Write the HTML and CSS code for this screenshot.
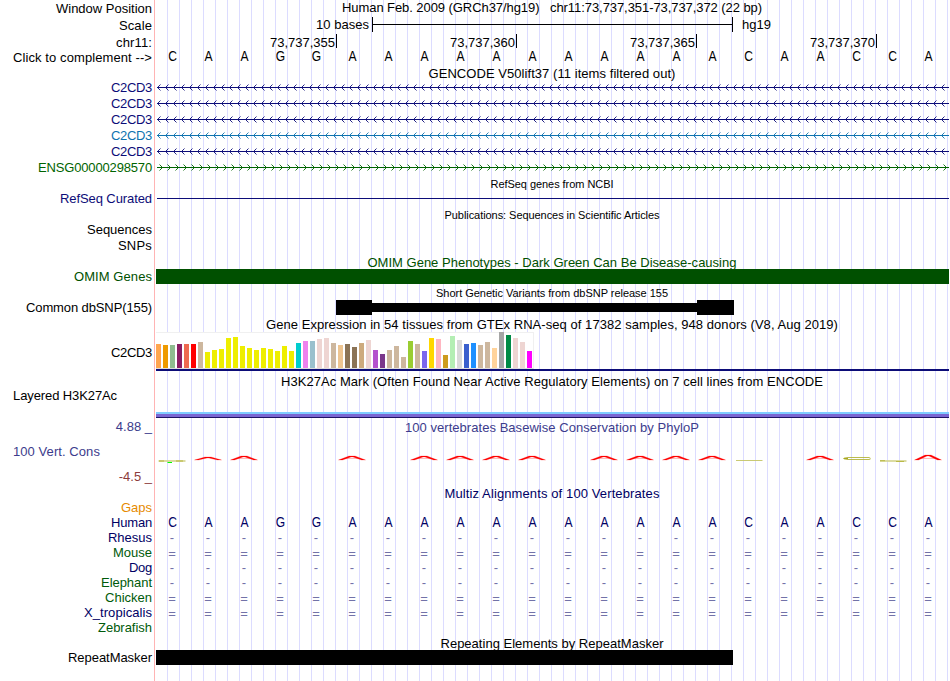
FILE: index.html
```html
<!DOCTYPE html>
<html lang="en">
<head>
<meta charset="utf-8">
<title>Genome Browser</title>
<link rel="stylesheet" href="styles.css">
</head>
<body>
<main class="browser">
  <div class="row h17"><div class="label p1"><span data-w="96">Window Position</span></div><div class="track title"><span data-w="420">Human Feb. 2009 (GRCh37/hg19) &nbsp; chr11:73,737,351-73,737,372 (22 bp)</span></div></div>
  <div class="row h17"><div class="label p1"><span data-w="33">Scale</span></div><div class="track scale"><span class="bases" data-w="53">10 bases</span><div class="ruler"></div><span data-w="29">hg19</span></div></div>
  <div class="row h15"><div class="label p1"><span data-w="36">chr11:</span></div><div class="track ticks"><div class="tick p1"><span data-w="65">73,737,355</span></div><div class="tick p1"><span data-w="65">73,737,360</span></div><div class="tick p1"><span data-w="65">73,737,365</span></div><div class="tick p1"><span data-w="65">73,737,370</span></div></div></div>
  <div class="row h16"><div class="label p1"><span data-w="139">Click to complement --&gt;</span></div><div class="track seq" data-seq="CAAGGAAAAAAAAAAACAACCA"></div></div>
  <div class="row h14"><div class="label"></div><div class="track title p1"><span data-w="247">GENCODE V50lift37 (11 items filtered out)</span></div></div>
  <div class="row h16 navy"><div class="label p1"><span data-w="41">C2CD3</span></div><div class="track gene minus"></div></div>
  <div class="row h16 navy"><div class="label p1"><span data-w="41">C2CD3</span></div><div class="track gene minus"></div></div>
  <div class="row h16 navy"><div class="label p1"><span data-w="41">C2CD3</span></div><div class="track gene minus"></div></div>
  <div class="row h16 azure"><div class="label p1"><span data-w="41">C2CD3</span></div><div class="track gene minus"></div></div>
  <div class="row h16 navy"><div class="label p1"><span data-w="41">C2CD3</span></div><div class="track gene minus"></div></div>
  <div class="row h16 green"><div class="label p1"><span data-w="114">ENSG00000298570</span></div><div class="track gene plus"></div></div>
  <div class="row h15"><div class="label"></div><div class="track title small"><span data-w="123">RefSeq genes from NCBI</span></div></div>
  <div class="row h16 navy"><div class="label p1"><span data-w="92">RefSeq Curated</span></div><div class="track"><div class="thinline"></div></div></div>
  <div class="row h15"><div class="label"></div><div class="track title small"><span data-w="215">Publications: Sequences in Scientific Articles</span></div></div>
  <div class="row h16"><div class="label p1"><span data-w="65">Sequences</span></div><div class="track"></div></div>
  <div class="row h16"><div class="label p1"><span data-w="34">SNPs</span></div><div class="track"></div></div>
  <div class="row h15 dgreen"><div class="label"></div><div class="track title p2"><span data-w="369">OMIM Gene Phenotypes - Dark Green Can Be Disease-causing</span></div></div>
  <div class="row h16 dgreen"><div class="label p1"><span data-w="78">OMIM Genes</span></div><div class="track"><div class="bar"></div></div></div>
  <div class="row h15"><div class="label"></div><div class="track title small"><span data-w="232">Short Genetic Variants from dbSNP release 155</span></div></div>
  <div class="row h16"><div class="label p1"><span data-w="126">Common dbSNP(155)</span></div><div class="track variant"><i class="thick first"></i><i class="thin"></i><i class="thick last"></i></div></div>
  <div class="row h16"><div class="label"></div><div class="track title p2"><span data-w="572">Gene Expression in 54 tissues from GTEx RNA-seq of 17382 samples, 948 donors (V8, Aug 2019)</span></div></div>
  <div class="row h41"><div class="label p14"><span data-w="41">C2CD3</span></div><div class="track expression"><div class="chart" id="chart"></div><div class="genebase"></div></div></div>
  <div class="row h15"><div class="label"></div><div class="track title p2"><span data-w="542">H3K27Ac Mark (Often Found Near Active Regulatory Elements) on 7 cell lines from ENCODE</span></div></div>
  <div class="row h31"><div class="label left p1"><span data-w="104">Layered H3K27Ac</span></div><div class="track histone"><div class="band"></div></div></div>
  <div class="row h66 cons"><div class="label stack p1"><span class="hi">4.88 _</span><span class="name" data-w="87">100 Vert. Cons</span><span class="lo">-4.5 _</span></div><div class="track"><div class="title p2"><span data-w="294">100 vertebrates Basewise Conservation by PhyloP</span></div><svg class="logo" id="logo" width="793" height="20" viewBox="156 450 793 20"></svg></div></div>
  <div class="row h16 dnavy"><div class="label"></div><div class="track title p2"><span data-w="215">Multiz Alignments of 100 Vertebrates</span></div></div>
  <div class="row h15 orange"><div class="label"><span data-w="31">Gaps</span></div><div class="track"></div></div>
  <div class="row h15 dnavy"><div class="label"><span data-w="41">Human</span></div><div class="track seq" data-seq="CAAGGAAAAAAAAAAACAACCA"></div></div>
  <div class="row h15 dnavy"><div class="label"><span data-w="44">Rhesus</span></div><div class="track seq faint" data-seq="----------------------"></div></div>
  <div class="row h15 forest"><div class="label"><span data-w="39">Mouse</span></div><div class="track seq faint eq" data-seq="======================"></div></div>
  <div class="row h15 dnavy"><div class="label"><span data-w="23">Dog</span></div><div class="track seq faint" data-seq="----------------------"></div></div>
  <div class="row h15 forest"><div class="label"><span data-w="51">Elephant</span></div><div class="track seq faint" data-seq="----------------------"></div></div>
  <div class="row h15 forest"><div class="label"><span data-w="47">Chicken</span></div><div class="track seq faint eq" data-seq="======================"></div></div>
  <div class="row h15 dnavy"><div class="label"><span data-w="68">X_tropicalis</span></div><div class="track seq faint eq" data-seq="======================"></div></div>
  <div class="row h15 forest"><div class="label"><span data-w="54">Zebrafish</span></div><div class="track"></div></div>
  <div class="row h14"><div class="label"></div><div class="track title p1"><span data-w="223">Repeating Elements by RepeatMasker</span></div></div>
  <div class="row h16"><div class="label p1"><span data-w="84">RepeatMasker</span></div><div class="track"><div class="bar repeat"></div></div></div>
</main>
<script src="script.js"></script>
</body>
</html>
```
FILE: styles.css
```css
* { box-sizing: border-box; }
body { margin: 0; background: #fff; overflow: hidden; }
.browser {
  width: 949px;
  height: 681px;
  font: 13px/15px "Liberation Sans", Arial, sans-serif;
  color: #000;
  background:
    linear-gradient(#ffb4b4, #ffb4b4) 154px 0 / 1px 100% no-repeat,
    repeating-linear-gradient(90deg, transparent 0 11px, #dcdcff 11px 12px) 156px 0 / 793px 100% no-repeat;
}
.row { display: grid; grid-template-columns: 156px 793px; white-space: nowrap; }
.h14 { height: 14px; } .h15 { height: 15px; } .h16 { height: 16px; } .h17 { height: 17px; }
.h31 { height: 31px; } .h41 { height: 41px; } .h66 { height: 66px; }
.row span { display: inline-block; }
.label { text-align: right; padding-right: 4px; min-width: 0; }
.label.left { text-align: left; padding-left: 13px; }
.track { min-width: 0; }
.title { text-align: center; padding-right: 1px; }
.small { font-size: 11px; padding-top: 2px; line-height: 14px; }
.p1 { padding-top: 1px; } .p2 { padding-top: 2px; } .p14 { padding-top: 14px; }

.navy { color: #0c0c78; }
.azure { color: #0e73af; }
.green { color: #006400; }
.dgreen { color: #005000; }
.dnavy { color: #000064; }
.forest { color: #005a0a; }
.orange { color: #e68a00; }

.scale { display: flex; padding-left: 160px; }
.bases { width: 56px; }
.ruler {
  width: 361px; height: 15px; margin-right: 9px;
  border: solid #000; border-width: 0 1px;
  background: linear-gradient(#000, #000) 0 7px / 100% 1px no-repeat;
}
.ticks { display: flex; }
.tick { width: 180px; height: 14px; text-align: right; padding-right: 1px; border-right: 1px solid #000; }
.tick:first-child { width: 181px; }

.seq { display: grid; grid-template-columns: repeat(22, 36px); margin-left: -1px; width: 792px; text-align: center; }
.seq b { font-weight: normal; font-size: 14px; width: 35px; transform: scaleX(0.86); }
.faint b { color: #7272a8; width: 34px; font-size: 13px; transform: none; }
.eq b { padding-top: 1px; }

.gene svg { display: block; margin-top: 5px; }
.thinline { height: 1px; margin: 8px 0 0 1px; background: #0c0c78; }
.bar { height: 15px; margin-top: 1px; background: #005000; }
.repeat { width: 577px; background: #000; }
.variant { display: flex; align-items: center; padding: 1px 0 0 180px; }
.variant i { background: #000; }
.thick { height: 15px; width: 36px; }
.thick.last { width: 37px; }
.thin { height: 9px; width: 325px; }

.expression { padding-top: 1px; }
.chart {
  display: flex; align-items: flex-end; gap: 2px;
  width: 378px; height: 37px; background: #fff;
  border-top: 1px solid #f0f0f0; border-right: 1px solid #f0f0f0; border-bottom: 1px solid #dcdcdc;
}
.chart i { width: 5px; flex: none; }
.genebase { height: 2px; background: #0c0c78; }
.histone { display: flex; align-items: flex-end; }
.band { width: 100%; height: 6px; background: linear-gradient(#80ccff 0 2px, #7a66d2 2px 5px, #1e1464 5px); }

.cons { color: #3c3c8c; }
.stack { display: flex; flex-direction: column; align-items: flex-end; gap: 10px; }
.stack .name { align-self: flex-start; margin-left: 13px; }
.stack .lo { color: #8c3c3c; }
.logo { display: block; margin-top: 15px; }
```
FILE: script.js
```js
const NS = "http://www.w3.org/2000/svg";

// Fit each caption to its nominal width.
document.querySelectorAll("[data-w]").forEach(el => {
  const range = document.createRange();
  range.selectNodeContents(el);
  const w = range.getBoundingClientRect().width;
  el.style.letterSpacing = ((+el.dataset.w - w) / el.textContent.length).toFixed(3) + "px";
});

document.querySelectorAll("[data-seq]").forEach(el => {
  for (const base of el.dataset.seq) {
    const b = document.createElement("b");
    b.textContent = base;
    el.append(b);
  }
});

// Intron lines with strand arrows every 8px.
document.querySelectorAll(".gene").forEach(el => {
  const minus = el.classList.contains("minus");
  let d = "";
  for (let x = 0; x < 790; x += 8) {
    d += minus ? `M${x + 4.5} 0.5L${x + 1.5} 3.5L${x + 4.5} 6.5` : `M${x + 3.5} 0.5L${x + 6.5} 3.5L${x + 3.5} 6.5`;
  }
  el.innerHTML = `<svg width="793" height="7" fill="none" stroke="currentColor"><path d="M1 3.5H793"/><path stroke-width="0.9" d="${d}"/></svg>`;
});

// Median expression per tissue: height, colour.
const tissues = "24 FFA54F,23 EE9A00,23 8FBC8F,24 8B1C62,24 EE6A50,24 FF0000,26 CDB79E,16 EEEE00,18 EEEE00,19 EEEE00,30 EEEE00,31 EEEE00,22 EEEE00,20 EEEE00,18 EEEE00,20 EEEE00,19 EEEE00,17 EEEE00,22 EEEE00,17 EEEE00,25 00CDCD,27 EE82EE,27 9AC0CD,29 EED5D2,30 EED5D2,25 CDB79E,23 EEC591,24 8B7355,21 8B7355,25 CDAA7D,28 EED5D2,18 B452CD,14 7A378B,18 CDB79E,22 CDB79E,11 CDB79E,27 9ACD32,24 CDB79E,17 7A67EE,30 FFD700,29 FFB6C1,13 CD9B1D,32 B4EEB4,28 D9D9D9,24 3A5FCD,25 1E90FF,23 CDB79E,26 CDB79E,20 FFD39B,36 A6A6A6,33 008B45,30 EED5D2,26 EED5D2,17 FF00FF";
const chart = document.getElementById("chart");
tissues.split(",").forEach(t => {
  const [h, c] = t.split(" ");
  const bar = document.createElement("i");
  bar.style.height = h + "px";
  bar.style.background = "#" + c;
  chart.append(bar);
});

// Conservation logo, flattened base shapes.
const logo = document.getElementById("logo");
const add = (d, stroke, width, fill = "none") => {
  const p = document.createElementNS(NS, "path");
  p.setAttribute("d", d);
  p.setAttribute("fill", fill);
  p.setAttribute("stroke", stroke);
  p.setAttribute("stroke-width", width);
  logo.append(p);
};
[[1, 457], [2, 456], [5, 456], [7, 456], [8, 456], [9, 456], [10, 456], [12, 456], [13, 456], [14, 456], [15, 456], [18, 456], [21, 455]].forEach(([i, y]) => {
  const c = 172 + 36 * i;
  if (i > 1) add(`M${c - 7} 458.5H${c + 7}`, "#ff9c9c", 0.7);
  add(`M${c - 13.5} 460L${c - 3} ${y}H${c + 3}L${c + 13.5} 460H${c + 9.5}L${c + 1} ${y + 1.1}H${c - 1}L${c - 9.5} 460Z`, "#ff0000", 0.2, "#ff0000");
});
add("M158.5 461H185.5", "#d4d48c", 1.6);
add("M159 461H164M176 461H183", "#b4b43c", 1);
add("M167.5 462.5H172", "#00ff00", 1);
add("M736 460.5H762.5", "#c4c464", 0.9);
add("M870.5 458.3L869 457.5H848L843.5 458.5L848 459.5H869L870.5 459", "#b4b43c", 0.9);
add("M844 458.5H848", "#a8a820", 1.4);
add("M880 461H906.5", "#d4d48c", 1.6);
add("M880 460.7H885M896 461.5H904", "#b4b43c", 0.9);
```
